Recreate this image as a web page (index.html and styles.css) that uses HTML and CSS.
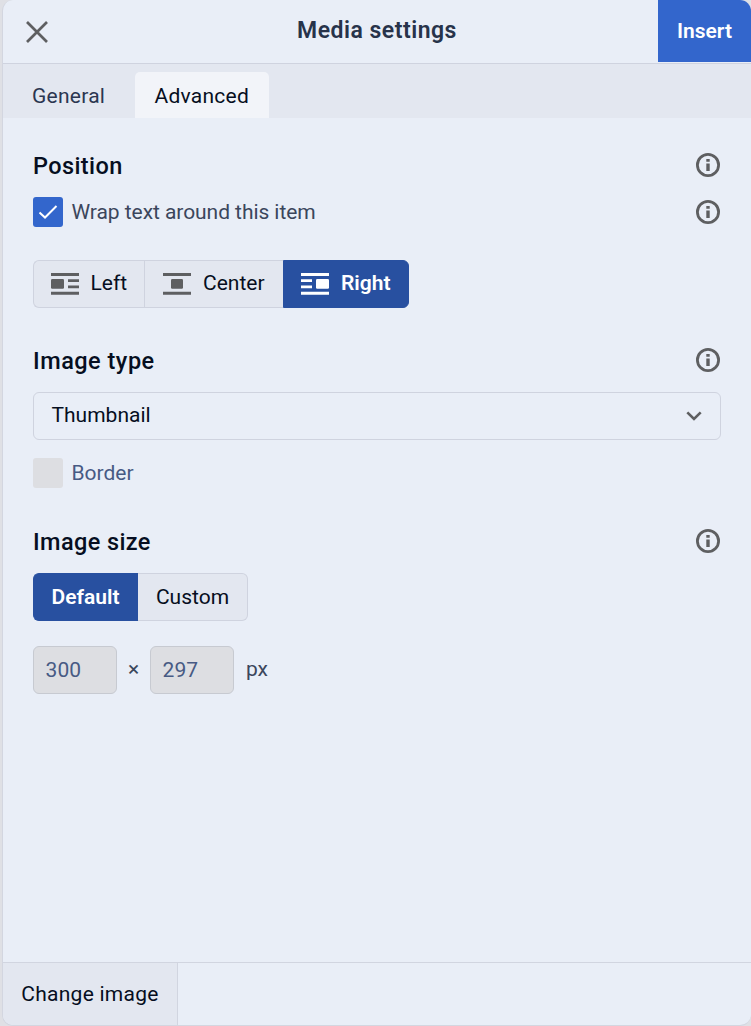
FILE: index.html
```html
<!DOCTYPE html>
<html lang="en">
<head>
<meta charset="utf-8">
<title>Media settings</title>
<link rel="stylesheet" href="styles.css">
</head>
<body>
<svg class="defs" width="0" height="0" aria-hidden="true">
  <symbol id="info" viewBox="0 0 24 24">
    <circle cx="12" cy="12" r="10.6" fill="none" stroke="currentColor" stroke-width="2.8"/>
    <path fill="currentColor" d="M10.300 6h3.400v2.800h-3.400zM10.300 10.500h3.400v7.500h-3.400z"/>
  </symbol>
</svg>
<div class="dialog">
  <header class="header">
    <button class="close" aria-label="Close"><svg width="22" height="22" viewBox="0 0 22 22"><path d="M1 1 21 21M21 1 1 21" stroke="currentColor" stroke-width="2.7"/></svg></button>
    <h1 class="title">Media settings</h1>
    <button class="insert">Insert</button>
  </header>
  <nav class="tabs">
    <a class="tab">General</a>
    <a class="tab tab-active">Advanced</a>
  </nav>
  <main class="content">
    <section class="section-position">
      <div class="row heading-row"><h2 class="heading">Position</h2><svg class="info"><use href="#info"/></svg></div>
      <div class="row check-row">
        <label class="check check-wrap"><span class="box box-checked"><svg width="20" height="16" viewBox="0 0 20 16"><path d="M1.5 8.5 7 13.500 18.500 2" fill="none" stroke="#fff" stroke-width="2"/></svg></span>Wrap text around this item</label>
        <svg class="info"><use href="#info"/></svg>
      </div>
      <div class="group group-position">
        <button class="option option-left"><svg width="28" height="22" viewBox="0 0 28 22" fill="currentColor"><path d="M0 0h28v3H0zM0 18.700h28v3H0zM17 6.300h11v2.800H17zM17 12.400h11v2.800H17z"/><rect y="6" width="13" height="9.7" rx="1.2"/></svg><span>Left</span></button>
        <button class="option option-center"><svg width="28" height="22" viewBox="0 0 28 22" fill="currentColor"><path d="M0 0h28v3H0zM0 18.700h28v3H0z"/><rect x="8" y="6" width="12" height="9.7" rx="1.2"/></svg><span>Center</span></button>
        <button class="option option-right selected"><svg width="28" height="22" viewBox="0 0 28 22" fill="currentColor"><path d="M0 0h28v3H0zM0 18.700h28v3H0zM0 6.300h11v2.800H0zM0 12.400h11v2.800H0z"/><rect x="15" y="6" width="13" height="9.7" rx="1.2"/></svg><span>Right</span></button>
      </div>
    </section>
    <section class="section-type">
      <div class="row heading-row"><h2 class="heading">Image type</h2><svg class="info"><use href="#info"/></svg></div>
      <div class="select"><span>Thumbnail</span><svg width="16" height="10" viewBox="0 0 16 10"><path d="M1.300 1.300 8 8l6.700-6.700" fill="none" stroke="currentColor" stroke-width="2.6"/></svg></div>
      <label class="check check-disabled"><span class="box"></span>Border</label>
    </section>
    <section class="section-size">
      <div class="row heading-row"><h2 class="heading">Image size</h2><svg class="info"><use href="#info"/></svg></div>
      <div class="group group-size">
        <button class="option option-default selected">Default</button>
        <button class="option option-custom">Custom</button>
      </div>
      <div class="dimensions"><span class="field">300</span><span class="times">×</span><span class="field">297</span><span class="unit">px</span></div>
    </section>
  </main>
  <footer class="footer"><button class="change">Change image</button></footer>
</div>
</body>
</html>
```
FILE: styles.css
```css
* { box-sizing: border-box; }
body {
  margin: 0;
  padding-left: 2px;
  background: #dfe0e5;
  font: 21px/24px Roboto, sans-serif;
  color: #060e21;
}
button {
  margin: 0;
  padding: 0;
  border: 0;
  background: none;
  font: inherit;
  color: inherit;
  white-space: nowrap;
}
svg { display: block; flex: none; }
.defs { position: absolute; }
.dialog {
  display: flex;
  flex-direction: column;
  height: 1026px;
  overflow: hidden;
  border: solid #d3d6e0;
  border-width: 0 0 1px 1px;
  border-radius: 11px;
  background: #e9eef7;
}
.header {
  display: grid;
  grid-template-columns: 93px 1fr 93px;
  height: 64px;
  border-bottom: 1px solid #cfd3df;
}
.close { padding: 21px 23px; color: #5e5f61; }
.title {
  margin: 0;
  padding-top: 18px;
  font-size: 23px;
  font-weight: 600;
  line-height: 25px;
  letter-spacing: 0.5px;
  text-align: center;
  color: #27334a;
}
.insert {
  height: 62px;
  background: #3366cc;
  color: #fff;
  font-weight: 600;
}
.tabs {
  display: flex;
  align-items: flex-end;
  height: 54px;
  padding-left: 10px;
  background: #e3e7f0;
}
.tab {
  width: 112px;
  height: 46px;
  padding: 12px 0 0 19px;
  letter-spacing: 0.25px;
  color: #2b3650;
}
.tab + .tab { margin-left: 10px; }
.tab-active {
  width: 134px;
  padding-left: 19.5px;
  border-radius: 5px 5px 0 0;
  background: #f2f4f9;
  color: #060e21;
}
.content { flex: 1; padding: 36px 30px 0; }
.row { display: flex; justify-content: space-between; align-items: center; }
.heading-row { height: 24px; }
.heading {
  margin: 0;
  font-size: 23.5px;
  line-height: 24px;
  font-weight: 500;
  letter-spacing: 0.4px;
}
.info { width: 24px; height: 24px; overflow: visible; margin: 0 1px 2px 0; color: #5e5f61; }
.check-row { height: 30px; margin-top: 19px; }
.check-row .info { margin-bottom: 0; }
.check { display: flex; align-items: center; gap: 8.5px; height: 30px; color: #3b465c; }
.check-wrap { letter-spacing: -0.06px; }
.box {
  display: grid;
  place-items: center;
  width: 30px;
  height: 30px;
  border-radius: 3px;
  background: #dddee2;
}
.box-checked { background: #3366cc; }
.check-disabled { margin-top: 18px; color: #475a84; }
.group { display: flex; height: 48px; }
.group-position { width: 376px; margin-top: 33px; }
.option {
  display: flex;
  align-items: center;
  justify-content: center;
  border: 1px solid #cfd3df;
  background: #e3e7f0;
}
.option svg { margin-right: 11.5px; color: #5e5f61; }
.option span { padding-bottom: 2px; }
.option:first-child { border-right: 0; border-radius: 6px 0 0 6px; }
.option:last-child { border-radius: 0 6px 6px 0; }
.option-left { width: 111px; }
.option-center { width: 139px; border-right: 0; }
.option-right { width: 126px; }
.group .selected { border-color: #2850a0; background: #2850a0; color: #fff; font-weight: 600; }
.group .selected svg { color: #fff; }
.section-type { margin-top: 41px; }
.section-size { margin-top: 42px; }
.section-type .heading-row { padding-bottom: 1px; }
.section-type .heading { padding-top: 1px; letter-spacing: 0.5px; }
.select {
  display: flex;
  justify-content: space-between;
  align-items: center;
  height: 48px;
  margin-top: 19px;
  padding: 0 18px 0 17.5px;
  border: 1px solid #cfd3df;
  border-radius: 6px;
}
.select span { padding-bottom: 2px; }
.select svg { color: #5e5f61; }
.group-size { margin-top: 19px; }
.section-size .heading { padding-bottom: 1px; }
.option-default { width: 105px; padding-right: 1px; }
.option-custom { width: 110px; border-left: 0; }
.dimensions { display: flex; align-items: center; margin-top: 25px; color: #3b465c; }
.field {
  width: 84px;
  height: 48px;
  padding: 11px 11.5px;
  border: 1px solid #c7cad1;
  border-radius: 6px;
  background: #dddee2;
  color: #475a84;
  letter-spacing: 0.1px;
}
.times { width: 33px; padding-bottom: 2px; text-align: center; }
.unit { margin-left: 12px; padding-bottom: 2px; letter-spacing: -0.2px; }
.footer { display: flex; height: 63px; border-top: 1px solid #d1d5e0; }
.change { width: 175px; border-right: 1px solid #d1d5e0; background: #e3e7f0; letter-spacing: 0.25px; }
```
